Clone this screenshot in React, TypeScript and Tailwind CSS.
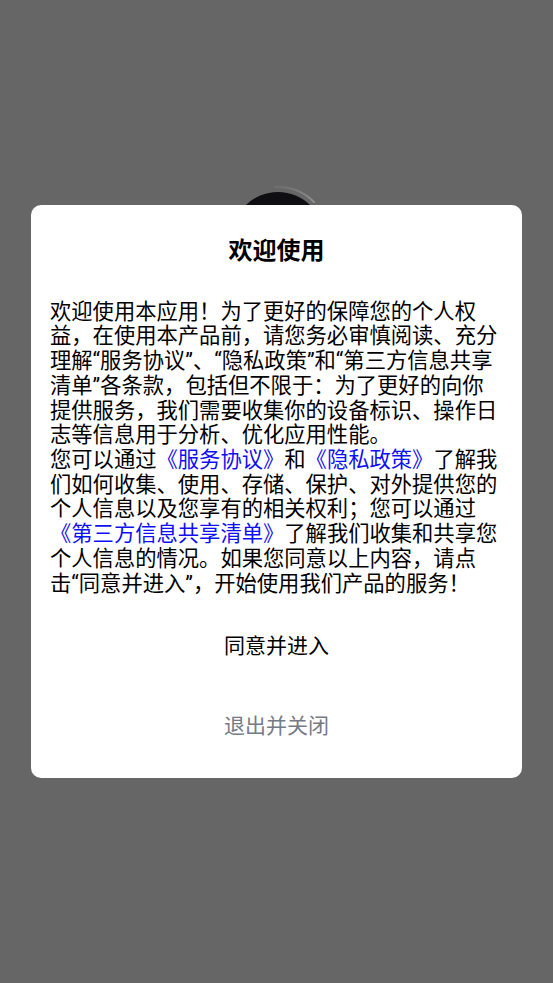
import React from "react";

const FONT = {
  fontFamily: 'Roboto, "Noto Sans CJK SC", sans-serif',
};

const Link: React.FC<{ children: React.ReactNode }> = ({ children }) => (
  <span className="text-[#0f0ff5]">{children}</span>
);

const Spinner: React.FC = () => (
  <div className="relative ml-[232px] h-[92px] w-[92px] rounded-full bg-[#0e0e13]">
    <svg
      className="absolute -left-[6px] -top-[6px]"
      width="104"
      height="104"
      viewBox="0 0 104 104"
    >
      <defs>
        <linearGradient id="arc" x1="0" y1="0" x2="1" y2="1">
          <stop offset="0" stopColor="#6f6f6f" />
          <stop offset="1" stopColor="#8e8e8e" />
        </linearGradient>
      </defs>
      <path
        d="M 49 1.1 A 51 51 0 0 1 88 16"
        fill="none"
        stroke="url(#arc)"
        strokeWidth="2"
        strokeLinecap="round"
      />
    </svg>
  </div>
);

const App: React.FC = () => {
  return (
    <div
      className="relative h-screen overflow-hidden bg-[#666666] pt-[192px]"
      style={FONT}
    >
      <Spinner />

      <div className="fixed inset-0 flex items-center justify-center">
        <div className="flex w-[491px] flex-col rounded-[10px] bg-white px-[19px] pb-[11px] pt-[31px]">
          <h2 className="text-center text-[24px] font-bold leading-[30px] text-black">
            欢迎使用
          </h2>

          <div className="mt-[34px] text-[21.3px] leading-[24.7px] text-black">
            <p>
              欢迎使用本应用！为了更好的保障您的个人权益，在使用本产品前，请您务必审慎阅读、充分理解“服务协议”、“隐私政策”和“第三方信息共享清单”各条款，包括但不限于：为了更好的向你提供服务，我们需要收集你的设备标识、操作日志等信息用于分析、优化应用性能。
            </p>
            <p>
              您可以通过<Link>《服务协议》</Link>和<Link>《隐私政策》</Link>
              了解我们如何收集、使用、存储、保护、对外提供您的个人信息以及您享有的相关权利；您可以通过
              <Link>《第三方信息共享清单》</Link>
              了解我们收集和共享您个人信息的情况。如果您同意以上内容，请点击“同意并进入”，开始使用我们产品的服务！
            </p>
          </div>

          <div className="mt-[11px] flex flex-col">
            <button className="flex h-[80px] items-center justify-center text-[21px] text-black">
              同意并进入
            </button>
            <button className="flex h-[80px] items-center justify-center text-[21px] text-[#747b86]">
              退出并关闭
            </button>
          </div>
        </div>
      </div>
    </div>
  );
};

export default App;
